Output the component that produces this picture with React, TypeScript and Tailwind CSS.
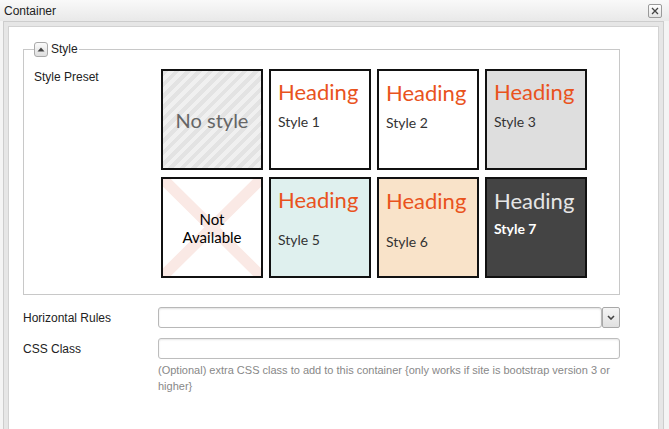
import React from 'react';

type Preset = {
  box: string;
  heading: string;
  label: string;
  labelText: string;
  text: string;
};

const presets: Preset[] = [
  { box: 'bg-white', heading: 'text-[#e9531d]', label: 'mt-[12px] text-[#333]', labelText: 'Style 1', text: 'Heading' },
  { box: 'bg-white', heading: 'mt-[1px] text-[#e9531d]', label: 'mt-[12px] text-[#333]', labelText: 'Style 2', text: 'Heading' },
  { box: 'bg-[#dedede]', heading: 'text-[#e9531d]', label: 'mt-[12px] text-[#333]', labelText: 'Style 3', text: 'Heading' },
];

const presets2: Preset[] = [
  { box: 'bg-[#dff0ee]', heading: 'text-[#e9531d]', label: 'mt-[22px] text-[#333]', labelText: 'Style 5', text: 'Heading' },
  { box: 'bg-[#f9e3c9]', heading: 'mt-[1px] text-[#e9531d]', label: 'mt-[23px] text-[#333]', labelText: 'Style 6', text: 'Heading' },
  { box: 'bg-[#444444]', heading: 'mt-[1px] text-[#e6e6e6]', label: 'mt-[10px] font-bold text-white', labelText: 'Style 7', text: 'Heading' },
];

const Tile: React.FC<{ p: Preset }> = ({ p }) => (
  <div className={`h-[101px] w-[102px] border-2 border-[#111] px-[7px] pt-[10px] ${p.box}`}>
    <div className={`text-[22px] leading-none ${p.heading}`}>{p.text}</div>
    <div className={`text-[14px] leading-none ${p.label}`}>{p.labelText}</div>
  </div>
);

export default function App() {
  return (
    <div className="flex h-[429px] w-[669px] flex-col overflow-hidden bg-[#f4f4f4] font-['Liberation_Sans',Arial,sans-serif] text-[12px] text-[#222]">
      {/* title bar */}
      <div className="flex h-[21px] shrink-0 items-center justify-between bg-gradient-to-b from-[#f9f9f9] to-[#e9e9e9] pl-[4px] pr-[7px]">
        <span className="text-[12px] text-[#222]">Container</span>
        <button className="flex h-[14px] w-[14px] items-center justify-center rounded-[2px] border border-[#9a9a9a] bg-gradient-to-b from-white to-[#e4e4e4]">
          <svg width="8" height="8" viewBox="0 0 8 8">
            <path d="M1 1L7 7M7 1L1 7" stroke="#444" strokeWidth="1.3" />
          </svg>
        </button>
      </div>

      {/* frame */}
      <div className="flex flex-1 flex-col pl-[3px] pr-[5px]">
        <div className="flex flex-1 flex-col border border-b-0 border-[#cdcdcd] bg-[#e6e6e6] px-[4px] pt-[4px]">
          <div className="flex-1 border border-b-0 border-[#d2d2d2] bg-white pl-[14px] pr-[38px]">
            <fieldset className="mt-[14px] border border-[#c8c8c8] px-[10px] pb-[16px]">
              <legend className="flex items-center gap-[3px] pr-[1px]">
                <span className="flex h-[15px] w-[14px] items-center justify-center rounded-[3px] border border-[#a9a9a9] bg-gradient-to-b from-[#fbfbfb] to-[#dedede]">
                  <svg width="8" height="5" viewBox="0 0 8 5">
                    <path d="M0.5 4.5L4 0.5L7.5 4.5Z" fill="#444" />
                  </svg>
                </span>
                <span className="text-[12px] leading-[16px] text-[#222]">Style</span>
              </legend>

              <div className="flex items-start pt-[12px]">
                <div className="w-[127px] pt-[1px] leading-[14px]">Style Preset</div>
                <div className="grid grid-cols-4 gap-x-[6px] gap-y-[7px] font-['Lato','Open_Sans',sans-serif]">
                  <div className="flex h-[101px] w-[102px] items-center justify-center border-2 border-[#111] bg-[repeating-linear-gradient(135deg,#e3e3e3_0px,#e3e3e3_4px,#f0f0f0_4px,#f0f0f0_8px)]">
                    <span className="text-[20px] text-[#666]">No style</span>
                  </div>
                  {presets.map(p => (
                    <Tile key={p.labelText} p={p} />
                  ))}
                  <div className="relative flex h-[101px] w-[102px] items-center justify-center border-2 border-[#111] bg-white">
                    <svg className="absolute inset-0" width="98" height="97" viewBox="0 0 98 97">
                      <path d="M0 0L98 97M98 0L0 97" stroke="#fae9e5" strokeWidth="11" />
                    </svg>
                    <span className="relative text-center text-[15px] leading-[18px] text-black">
                      Not
                      <br />
                      Available
                    </span>
                  </div>
                  {presets2.map(p => (
                    <Tile key={p.labelText} p={p} />
                  ))}
                </div>
              </div>
            </fieldset>

            <div className="mt-[12px] flex items-center">
              <div className="w-[135px]">Horizontal Rules</div>
              <div className="flex flex-1">
                <div className="h-[21px] flex-1 rounded-[3px] border border-[#b8b8b8] bg-white shadow-[inset_0_1px_2px_rgba(0,0,0,0.12)]" />
                <div className="flex h-[21px] w-[18px] items-center justify-center rounded-[2px] border border-[#a8a8a8] bg-gradient-to-b from-[#f5f5f5] to-[#e0e0e0]">
                  <svg width="8" height="5" viewBox="0 0 8 5">
                    <path d="M1 1L4 4L7 1" stroke="#444" strokeWidth="1.6" fill="none" />
                  </svg>
                </div>
              </div>
            </div>

            <div className="mt-[10px] flex items-center">
              <div className="w-[135px]">CSS Class</div>
              <div className="h-[21px] flex-1 rounded-[3px] border border-[#bdbdbd] bg-white shadow-[inset_0_1px_2px_rgba(0,0,0,0.1)]" />
            </div>

            <div className="mt-[3px] flex">
              <div className="w-[135px] shrink-0" />
              <p className="flex-1 text-[11px] leading-[16px] text-[#888]">
                (Optional) extra CSS class to add to this container {'{'}only works if site is bootstrap version 3 or higher{'}'}
              </p>
            </div>
          </div>
        </div>
      </div>
    </div>
  );
}
